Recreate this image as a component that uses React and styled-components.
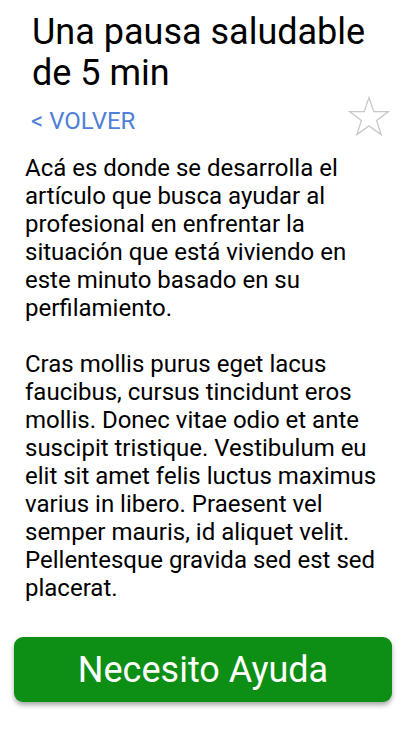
import React from 'react';
import styled, { createGlobalStyle } from 'styled-components';

const GlobalStyle = createGlobalStyle`
  html, body {
    margin: 0;
    padding: 0;
    background: #fff;
  }
  body {
    font-family: Roboto, "Noto Sans", sans-serif;
    color: #000;
  }
`;

const Page = styled.div`
  width: 411px;
  height: 731px;
  display: flex;
  flex-direction: column;
  box-sizing: border-box;
`;

const Title = styled.h1`
  margin: 0;
  padding: 12px 20px 0 32px;
  font-size: 36px;
  font-weight: 400;
  line-height: 41px;
`;

const NavRow = styled.div`
  display: flex;
  align-items: center;
  justify-content: space-between;
  padding: 5px 20px 0 31px;
  height: 44px;
`;

const BackLink = styled.a`
  color: #4f7fd8;
  font-size: 24px;
  text-decoration: none;
  cursor: pointer;
`;

const StarButton = styled.button`
  border: 0;
  background: none;
  padding: 0;
  width: 42px;
  height: 42px;
  display: flex;
  margin: 0 1px 8px 0;
`;

const Article = styled.div`
  padding: 11px 20px 0 25px;
  font-size: 24px;
  line-height: 28px;
  p {
    margin: 0 0 28px 0;
  }
`;

const HelpButton = styled.button`
  margin: auto 19px 29px 14px;
  height: 65px;
  border: 0;
  border-radius: 9px;
  background: #0c8f14;
  color: #fff;
  font-family: Roboto, sans-serif;
  font-size: 36px;
  box-shadow: 0 3px 5px rgba(0, 0, 0, 0.35);
`;

const Star = () => (
  <svg width="42" height="42" viewBox="0 0 42 42">
    <polygon
      points="21,1.5 25.8,15.6 40.5,15.6 28.6,24.4 33.1,38.5 21,29.9 8.9,38.5 13.4,24.4 1.5,15.6 16.2,15.6"
      fill="none"
      stroke="#c8c8c8"
      strokeWidth="1.3"
      strokeLinejoin="miter"
    />
  </svg>
);

export default function App() {
  return (
    <>
      <GlobalStyle />
      <Page>
        <Title>Una pausa saludable de 5 min</Title>
        <NavRow>
          <BackLink>&lt; VOLVER</BackLink>
          <StarButton aria-label="favorito">
            <Star />
          </StarButton>
        </NavRow>
        <Article>
          <p>
            Acá es donde se desarrolla el artículo que busca ayudar al profesional en
            enfrentar la situación que está viviendo en este minuto basado en su
            perfilamiento.
          </p>
          <p>
            Cras mollis purus eget lacus faucibus, cursus tincidunt eros mollis. Donec
            vitae odio et ante suscipit tristique. Vestibulum eu elit sit amet felis
            luctus maximus varius in libero. Praesent vel semper mauris, id aliquet
            velit. Pellentesque gravida sed est sed placerat.
          </p>
        </Article>
        <HelpButton>Necesito Ayuda</HelpButton>
      </Page>
    </>
  );
}
